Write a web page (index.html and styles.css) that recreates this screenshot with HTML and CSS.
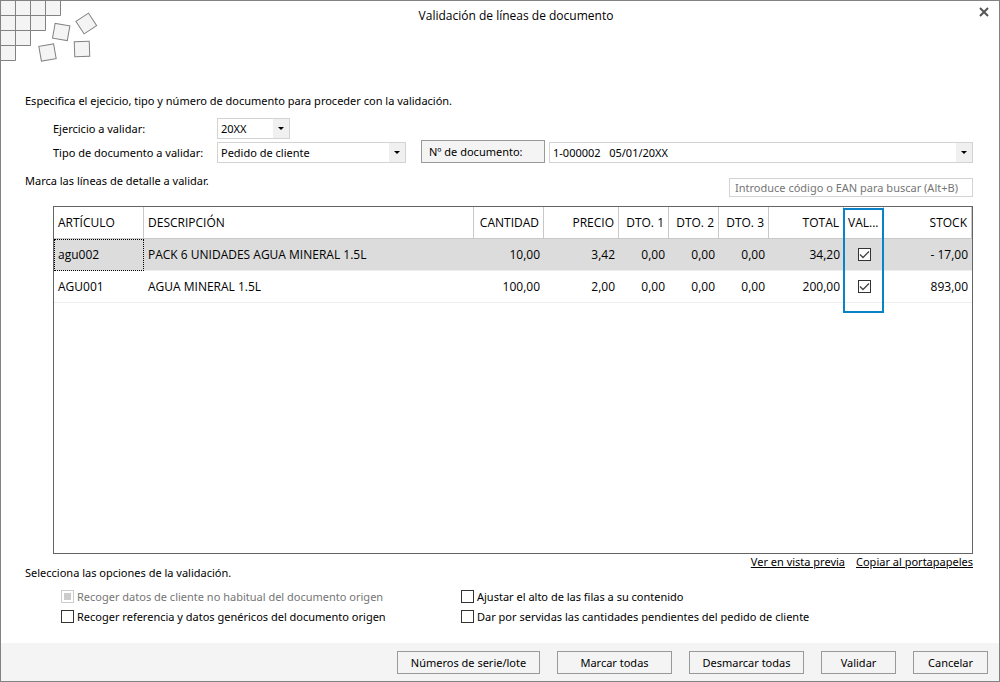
FILE: index.html
```html
<!DOCTYPE html>
<html lang="es">
<head>
<meta charset="utf-8">
<meta name="viewport" content="width=device-width, initial-scale=1">
<title>Validación de líneas de documento</title>
<link rel="stylesheet" href="styles.css">
</head>
<body>
<main class="dialog">
  <header class="header">
    <svg class="art" width="97" height="62" viewBox="0 0 97 62" fill="#f4f4f4" stroke="#828282" aria-hidden="true">
      <path d="M-.5-.5H59.500V14.500H44.500V29.500H29.500V44.500H14.500V59.500H-.5Z"/>
      <path fill="none" d="M-.5 14.500H44.500M-.5 29.500H29.500M-.5 44.500H14.500M14.500-.5V44.500M29.500-.5V29.500M44.500-.5V14.500"/>
      <rect x="-7.500" y="-7.500" width="15" height="15" transform="translate(60.200 31) rotate(10)"/>
      <rect x="-7.500" y="-7.500" width="15" height="15" transform="translate(85.300 22.500) rotate(-33)"/>
      <rect x="-7.500" y="-7.500" width="15" height="15" transform="translate(46.500 51.500) rotate(-10)"/>
      <rect x="-7.500" y="-7.500" width="15" height="15" transform="translate(81 48) rotate(-2)"/>
    </svg>
    <h1 class="title">Validación de líneas de documento</h1>
    <button class="close" type="button" aria-label="Cerrar">
      <svg width="10" height="10" viewBox="0 0 10 10" fill="none" stroke="#555" stroke-width="2"><path d="M1 1L9 9M9 1L1 9"/></svg>
    </button>
  </header>

  <form class="body">
    <p class="text">Especifica el ejecicio, tipo y número de documento para proceder con la validación.</p>
    <div class="fields">
      <div class="field-row">
        <label class="label" for="ejercicio">Ejercicio a validar:</label>
        <span class="combo combo-year">
          <select id="ejercicio"><option>20XX</option></select>
          <svg class="arrow" viewBox="0 0 16 19" aria-hidden="true"><path d="M5 8H11L8 11Z"/></svg>
        </span>
      </div>
      <div class="field-row">
        <label class="label" for="tipo">Tipo de documento a validar:</label>
        <span class="combo combo-type">
          <select id="tipo"><option>Pedido de cliente</option></select>
          <svg class="arrow" viewBox="0 0 16 19" aria-hidden="true"><path d="M5 8H11L8 11Z"/></svg>
        </span>
        <button class="button doc-button" type="button" id="numero-boton">Nº de documento:</button>
        <span class="combo combo-doc">
          <select aria-labelledby="numero-boton"><option>1-000002&nbsp;&nbsp;&nbsp;05/01/20XX</option></select>
          <svg class="arrow" viewBox="0 0 16 19" aria-hidden="true"><path d="M5 8H11L8 11Z"/></svg>
        </span>
      </div>
    </div>

    <div class="search-row">
      <p class="text">Marca las líneas de detalle a validar.</p>
      <input class="search" type="text" aria-label="Buscar" placeholder="Introduce código o EAN para buscar (Alt+B)">
    </div>

    <div class="grid-box">
      <table class="lines">
        <thead>
          <tr>
            <th class="w-code">ARTÍCULO</th>
            <th>DESCRIPCIÓN</th>
            <th class="w-qty num">CANTIDAD</th>
            <th class="w-price num">PRECIO</th>
            <th class="w-disc num">DTO. 1</th>
            <th class="w-disc num">DTO. 2</th>
            <th class="w-disc num">DTO. 3</th>
            <th class="w-price num">TOTAL</th>
            <th class="w-val">VAL...<span class="highlight"></span></th>
            <th class="w-stock num">STOCK</th>
          </tr>
        </thead>
        <tbody>
          <tr class="selected">
            <td class="focused">agu002</td>
            <td>PACK 6 UNIDADES AGUA MINERAL 1.5L</td>
            <td class="num">10,00</td>
            <td class="num">3,42</td>
            <td class="num">0,00</td>
            <td class="num">0,00</td>
            <td class="num">0,00</td>
            <td class="num">34,20</td>
            <td><input class="check check-centered" type="checkbox" checked aria-label="Validar agu002"></td>
            <td class="num">- 17,00</td>
          </tr>
          <tr>
            <td>AGU001</td>
            <td>AGUA MINERAL 1.5L</td>
            <td class="num">100,00</td>
            <td class="num">2,00</td>
            <td class="num">0,00</td>
            <td class="num">0,00</td>
            <td class="num">0,00</td>
            <td class="num">200,00</td>
            <td><input class="check check-centered" type="checkbox" checked aria-label="Validar AGU001"></td>
            <td class="num">893,00</td>
          </tr>
        </tbody>
      </table>
    </div>

    <div class="links-row">
      <p class="text">Selecciona las opciones de la validación.</p>
      <nav class="links">
        <a href="#">Ver en vista previa</a>
        <a href="#">Copiar al portapapeles</a>
      </nav>
    </div>

    <div class="options">
      <label class="option option-disabled"><input class="check" type="checkbox" disabled>Recoger datos de cliente no habitual del documento origen</label>
      <label class="option"><input class="check" type="checkbox">Ajustar el alto de las filas a su contenido</label>
      <label class="option"><input class="check" type="checkbox">Recoger referencia y datos genéricos del documento origen</label>
      <label class="option"><input class="check" type="checkbox">Dar por servidas las cantidades pendientes del pedido de cliente</label>
    </div>
  </form>

  <footer class="footer">
    <button class="button action action-wide" type="button">Números de serie/lote</button>
    <button class="button action action-mid" type="button">Marcar todas</button>
    <button class="button action action-mid" type="button">Desmarcar todas</button>
    <button class="button action" type="button">Validar</button>
    <button class="button action" type="button">Cancelar</button>
  </footer>
</main>
</body>
</html>
```

FILE: styles.css
```css
* { box-sizing: border-box; }

body {
  margin: 0;
  font: 11px/16px "Noto Sans", "Open Sans", sans-serif;
  color: #000;
  background: #fff;
}

button, select, input { font: inherit; color: inherit; }

.dialog {
  display: flex;
  flex-direction: column;
  min-height: 100vh;
  border: 1px solid #828282;
}

.header {
  display: grid;
  grid-template-columns: 97px 1fr 65px;
  align-items: start;
}

.art { display: block; }

.title {
  margin: 0;
  padding-top: 7px;
  font-family: "Open Sans", "Noto Sans", sans-serif;
  font-size: 12px;
  font-weight: 400;
  text-align: center;
}

.close {
  display: flex;
  justify-self: end;
  margin: 2px 6px 0 0;
  padding: 4px;
  border: 0;
  background: none;
}

.body {
  flex: 1;
  display: flex;
  flex-direction: column;
  padding: 30px 26px 16px 24px;
}

.text { margin: 0; }

.fields {
  display: grid;
  gap: 1px;
  margin: 9px 0 10px 28px;
}

.field-row { display: flex; align-items: flex-end; }

.label { width: 164px; line-height: 20px; }

.combo {
  position: relative;
  display: flex;
  height: 21px;
  border: 1px solid #d3d3d3;
}

.combo select {
  flex: 1;
  min-width: 0;
  padding: 0 18px 0 3px;
  border: 0;
  background: #fff;
  appearance: none;
}

.arrow {
  position: absolute;
  top: 0;
  right: 0;
  width: 16px;
  height: 19px;
  background: #f0f0f0;
  pointer-events: none;
}

.combo-year { width: 73px; }
.combo-type { width: 189px; }
.combo-doc { flex: 1; margin-left: 4px; }

.button {
  height: 23px;
  padding: 0 8px;
  border: 1px solid #999;
  background: #f4f4f4;
}

.doc-button { width: 124px; margin-left: 15px; padding: 0 7px; text-align: left; }

.search-row {
  display: flex;
  justify-content: space-between;
  height: 24px;
}

.search {
  align-self: flex-end;
  width: 244px;
  height: 19px;
  padding: 0 5px 1px;
  border: 1px solid #d3d3d3;
}

.search::placeholder { color: #757575; opacity: 1; }

.grid-box {
  flex: 1;
  margin: 9px 0 0 28px;
  border: 1px solid #646464;
}

.lines {
  width: 100%;
  table-layout: fixed;
  border-collapse: separate;
  border-spacing: 0;
  font-family: "Open Sans", "Noto Sans", sans-serif;
  font-size: 12px;
}

.lines th, .lines td {
  height: 32px;
  padding: 0 4px;
  text-align: left;
  font-weight: 400;
  white-space: nowrap;
}

.lines th {
  position: relative;
  border-right: 1px solid #c8c8c8;
  border-bottom: 1px solid #c8c8c8;
}

.lines td { border-bottom: 1px solid #eee; }
.lines .num { text-align: right; }
.selected { background: #dcdcdc; }
.lines .focused { outline: 1px dotted #000; outline-offset: -1px; }

.w-code { width: 90px; }
.w-qty { width: 70px; }
.w-price { width: 75px; }
.w-disc { width: 50px; }
.w-val { width: 40px; }
.w-stock { width: 88px; }

.highlight {
  position: absolute;
  top: 1px;
  left: -1px;
  right: -1px;
  height: 105px;
  border: 2px solid #0a82c8;
  pointer-events: none;
}

.links-row { display: flex; justify-content: space-between; height: 27px; }
.links-row .text { align-self: flex-end; }
.links { display: flex; gap: 11px; }
.links a { color: #000; }

.options {
  display: grid;
  grid-template-columns: 400px 1fr;
  margin: 6px 0 0 36px;
}

.option { display: flex; align-items: center; gap: 3px; height: 20px; padding-bottom: 1px; }
.option-disabled { color: #757575; }

.check {
  appearance: none;
  width: 13px;
  height: 13px;
  margin: 0;
  border: 1px solid #333;
  background: #fff;
}

.check-centered { display: block; margin: 0 auto; }

.check:checked {
  background: #fff url('data:image/svg+xml,<svg xmlns="http://www.w3.org/2000/svg" viewBox="0 0 11 11"><path d="M1 5.500L4 8.500L10 2.500" fill="none" stroke="%23444" stroke-width="1.300"/></svg>');
}

.check:disabled {
  padding: 2px;
  border-color: #ccc;
  background: #ccc content-box;
}

.footer {
  display: flex;
  justify-content: flex-end;
  gap: 17px;
  padding: 8px 11px 7px;
  background: #f4f4f4;
}

.action { min-width: 75px; }
.action-mid { min-width: 115px; }
.action-wide { min-width: 143px; }
```
